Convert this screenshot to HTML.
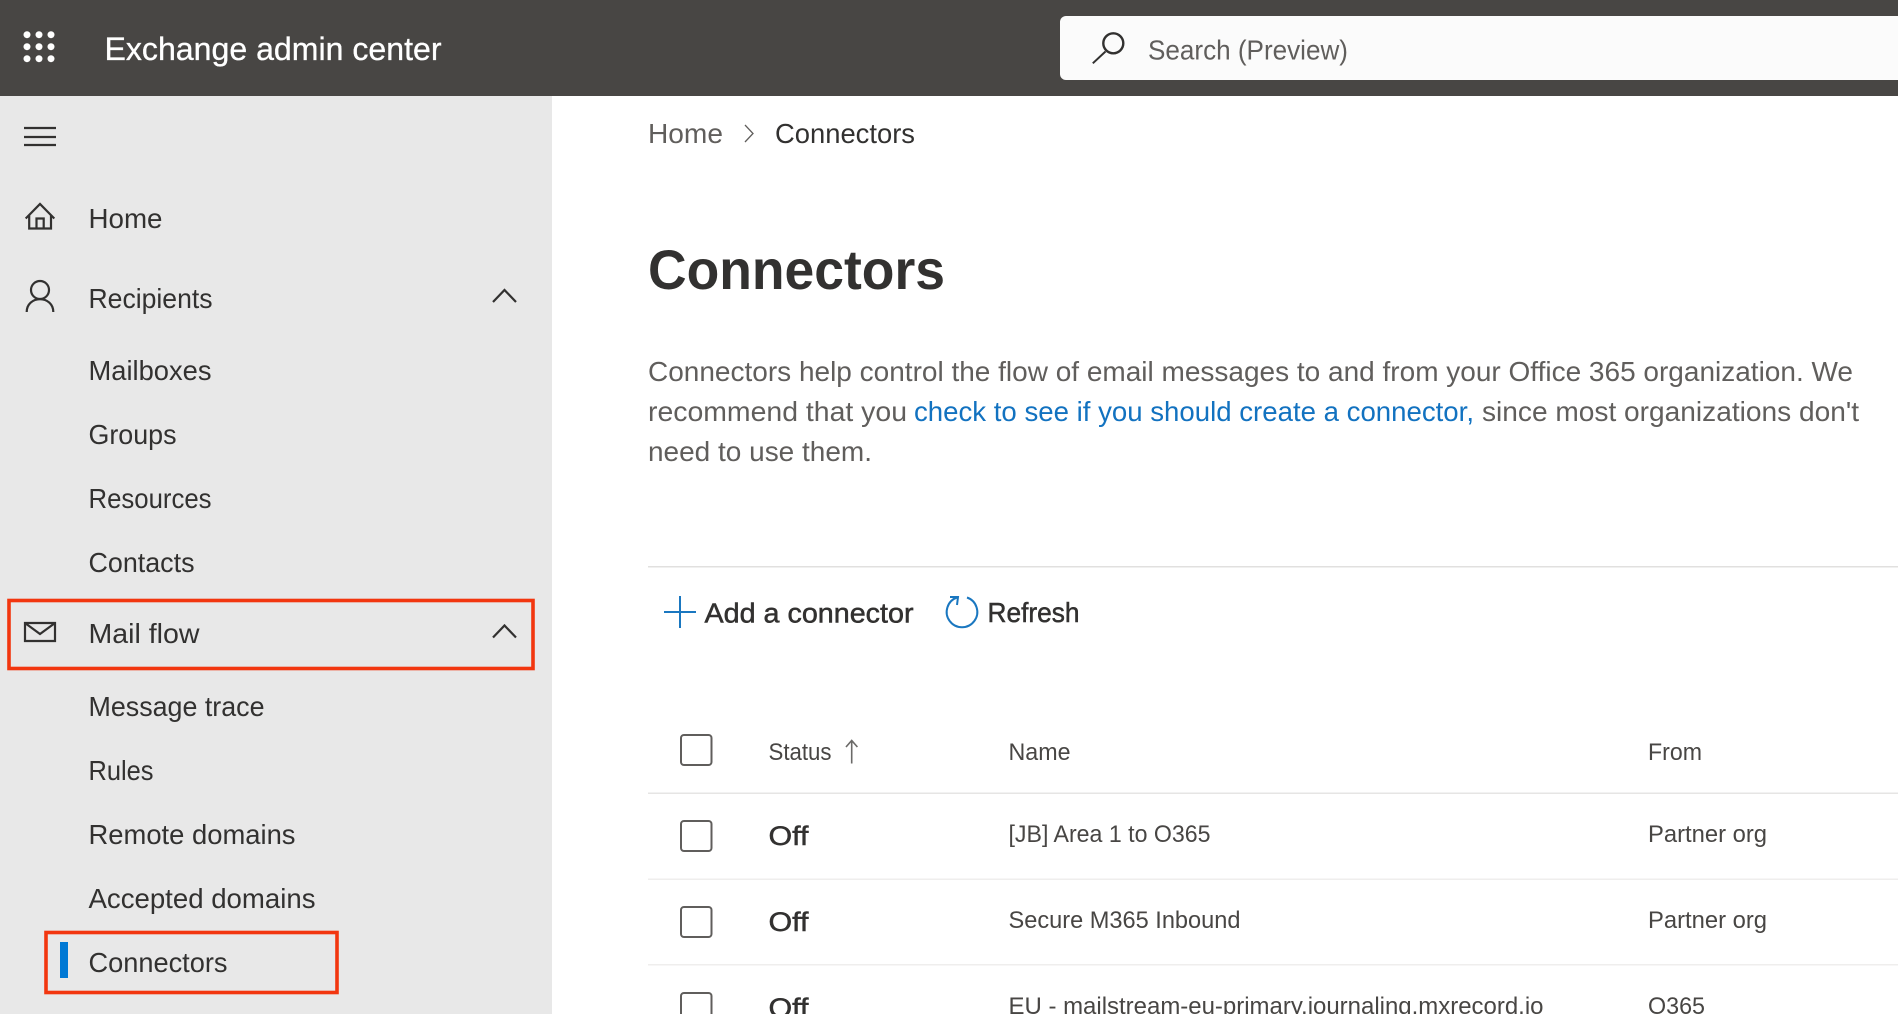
<!DOCTYPE html>
<html lang="en">
<head>
<meta charset="utf-8">
<title>Connectors - Exchange admin center</title>
<style>
html,body{margin:0;padding:0;background:#fff;width:1898px;height:1014px;overflow:hidden}
svg{display:block}
text{font-family:"Liberation Sans",sans-serif;fill:#323130}
.nav{font-size:28px}
.g{fill:#605e5c}
.semi{stroke:#323130;stroke-width:.5px}
.p{font-size:27.5px;fill:#605e5c}
.cell{font-size:24.5px;fill:#484644}
.ic{fill:none;stroke:#323130;stroke-width:2.2}
.cb{fill:none;stroke:#605e5c;stroke-width:2}
.red{fill:none;stroke:#f2360f;stroke-width:3.6}
</style>
</head>
<body>
<svg width="1898" height="1014" viewBox="0 0 1898 1014" xmlns="http://www.w3.org/2000/svg">
<rect width="1898" height="1014" fill="#fff"/>
<rect y="96" width="552" height="918" fill="#e8e8e8"/>
<rect width="1898" height="96" fill="#484644"/>

<g fill="#fff">
<circle cx="27" cy="34.700" r="3.500"/><circle cx="39" cy="34.700" r="3.500"/><circle cx="51" cy="34.700" r="3.500"/>
<circle cx="27" cy="46.700" r="3.500"/><circle cx="39" cy="46.700" r="3.500"/><circle cx="51" cy="46.700" r="3.500"/>
<circle cx="27" cy="58.700" r="3.500"/><circle cx="39" cy="58.700" r="3.500"/><circle cx="51" cy="58.700" r="3.500"/>
</g>
<text x="104.500" y="60" font-size="32" style="fill:#fff;stroke:#fff;stroke-width:.3px" textLength="337" lengthAdjust="spacingAndGlyphs">Exchange admin center</text>

<rect x="1060" y="16" width="860" height="64" rx="6" fill="#fbfbfb"/>
<circle cx="1113.300" cy="43.300" r="10" fill="none" stroke="#323130" stroke-width="2.400"/>
<path d="M1105.500 51.500 L1092.800 63.300" fill="none" stroke="#323130" stroke-width="2"/>
<text x="1148" y="59.500" font-size="28" class="g" textLength="200" lengthAdjust="spacingAndGlyphs">Search (Preview)</text>

<path d="M24 128H56M24 137H56M24 145H56" class="ic"/>

<path d="M25.700 218.500 L40 204 L54.300 218.500 M29.200 215V228.500H51V215 M29.200 228.500H36.500V218.500H43.700V228.500H51" class="ic" stroke-linejoin="miter"/>
<text x="88.500" y="228" class="nav" textLength="74" lengthAdjust="spacingAndGlyphs">Home</text>

<circle cx="40" cy="290" r="9" class="ic"/>
<path d="M26.700 312 C26.700 304 33 299.200 40 299.200 C47 299.200 53.300 304 53.300 312" class="ic"/>
<text x="88.500" y="308" class="nav" textLength="124" lengthAdjust="spacingAndGlyphs">Recipients</text>
<path d="M493 302 L504.500 290 L516 302" class="ic"/>

<text x="88.500" y="380" class="nav" textLength="123" lengthAdjust="spacingAndGlyphs">Mailboxes</text>
<text x="88.500" y="444" class="nav" textLength="88" lengthAdjust="spacingAndGlyphs">Groups</text>
<text x="88.500" y="508" class="nav" textLength="123" lengthAdjust="spacingAndGlyphs">Resources</text>
<text x="88.500" y="572" class="nav" textLength="106" lengthAdjust="spacingAndGlyphs">Contacts</text>

<rect x="9" y="600.500" width="524" height="68" class="red"/>
<path d="M25 623H55V641H25Z M25 623 L40 634 L55 623" class="ic"/>
<text x="88.500" y="643" class="nav" textLength="111" lengthAdjust="spacingAndGlyphs">Mail flow</text>
<path d="M493 637.500 L504.500 625.500 L516 637.500" class="ic"/>

<text x="88.500" y="716" class="nav" textLength="176" lengthAdjust="spacingAndGlyphs">Message trace</text>
<text x="88.500" y="780" class="nav" textLength="65" lengthAdjust="spacingAndGlyphs">Rules</text>
<text x="88.500" y="844" class="nav" textLength="207" lengthAdjust="spacingAndGlyphs">Remote domains</text>
<text x="88.500" y="908" class="nav" textLength="227" lengthAdjust="spacingAndGlyphs">Accepted domains</text>

<rect x="46" y="932.500" width="291" height="60" class="red"/>
<rect x="60" y="942" width="8" height="36" fill="#0078d4"/>
<text x="88.500" y="972" class="nav" textLength="139" lengthAdjust="spacingAndGlyphs">Connectors</text>

<text x="648" y="143" font-size="28" class="g" textLength="75" lengthAdjust="spacingAndGlyphs">Home</text>
<path d="M745 125 L753 133.500 L745 142" fill="none" stroke="#605e5c" stroke-width="1.300"/>
<text x="775" y="143" font-size="28" textLength="140" lengthAdjust="spacingAndGlyphs">Connectors</text>

<text x="648" y="289" font-size="56" font-weight="700" textLength="297" lengthAdjust="spacingAndGlyphs">Connectors</text>

<text x="648" y="381" class="p" textLength="1205" lengthAdjust="spacingAndGlyphs">Connectors help control the flow of email messages to and from your Office 365 organization. We</text>
<text x="648" y="421" class="p" textLength="259" lengthAdjust="spacingAndGlyphs">recommend that you</text>
<text x="914" y="421" class="p" style="fill:#1272c0" textLength="560" lengthAdjust="spacingAndGlyphs">check to see if you should create a connector,</text>
<text x="1482" y="421" class="p" textLength="377" lengthAdjust="spacingAndGlyphs">since most organizations don't</text>
<text x="648" y="461" class="p" textLength="224" lengthAdjust="spacingAndGlyphs">need to use them.</text>

<rect x="648" y="566" width="1250" height="1.500" fill="#e1e0df"/>

<path d="M664 612H696M680 596V628" fill="none" stroke="#1a77c0" stroke-width="2"/>
<text x="704.500" y="622.500" font-size="28" class="semi" textLength="209" lengthAdjust="spacingAndGlyphs">Add a connector</text>

<path d="M967 597.500 A15.300 15.300 0 1 1 957 597.500" fill="none" stroke="#1a77c0" stroke-width="2"/>
<path d="M950 597 H958 L957 605" fill="none" stroke="#1a77c0" stroke-width="2"/>
<text x="987.500" y="622" font-size="28" class="semi" textLength="92" lengthAdjust="spacingAndGlyphs">Refresh</text>

<rect x="681" y="735" width="30.500" height="30" rx="3" class="cb"/>
<text x="768.500" y="760" class="cell" textLength="63" lengthAdjust="spacingAndGlyphs">Status</text>
<path d="M851.700 763.500V741 M846 747 L851.700 740.500 L857.400 747" fill="none" stroke="#6b6a68" stroke-width="1.600"/>
<text x="1008.500" y="760" class="cell" textLength="62" lengthAdjust="spacingAndGlyphs">Name</text>
<text x="1648" y="760" class="cell" textLength="54" lengthAdjust="spacingAndGlyphs">From</text>
<rect x="648" y="792.500" width="1250" height="1.500" fill="#e6e5e4"/>

<rect x="681" y="821" width="30.500" height="30" rx="3" class="cb"/>
<text x="768.500" y="845" font-size="27" class="semi" textLength="40" lengthAdjust="spacingAndGlyphs">Off</text>
<text x="1008.500" y="842" class="cell" textLength="202" lengthAdjust="spacingAndGlyphs">[JB] Area 1 to O365</text>
<text x="1648" y="842" class="cell" textLength="119" lengthAdjust="spacingAndGlyphs">Partner org</text>
<rect x="648" y="878.500" width="1250" height="1.500" fill="#efeeed"/>

<rect x="681" y="907" width="30.500" height="30" rx="3" class="cb"/>
<text x="768.500" y="931" font-size="27" class="semi" textLength="40" lengthAdjust="spacingAndGlyphs">Off</text>
<text x="1008.500" y="928" class="cell" textLength="232" lengthAdjust="spacingAndGlyphs">Secure M365 Inbound</text>
<text x="1648" y="928" class="cell" textLength="119" lengthAdjust="spacingAndGlyphs">Partner org</text>
<rect x="648" y="964" width="1250" height="1.500" fill="#efeeed"/>

<rect x="681" y="993" width="30.500" height="30" rx="3" class="cb"/>
<text x="768.500" y="1017" font-size="27" class="semi" textLength="40" lengthAdjust="spacingAndGlyphs">Off</text>
<text x="1008.500" y="1014" class="cell" textLength="535" lengthAdjust="spacingAndGlyphs">EU - mailstream-eu-primary.journaling.mxrecord.io</text>
<text x="1648" y="1014" class="cell" textLength="57" lengthAdjust="spacingAndGlyphs">O365</text>
</svg>
</body>
</html>
